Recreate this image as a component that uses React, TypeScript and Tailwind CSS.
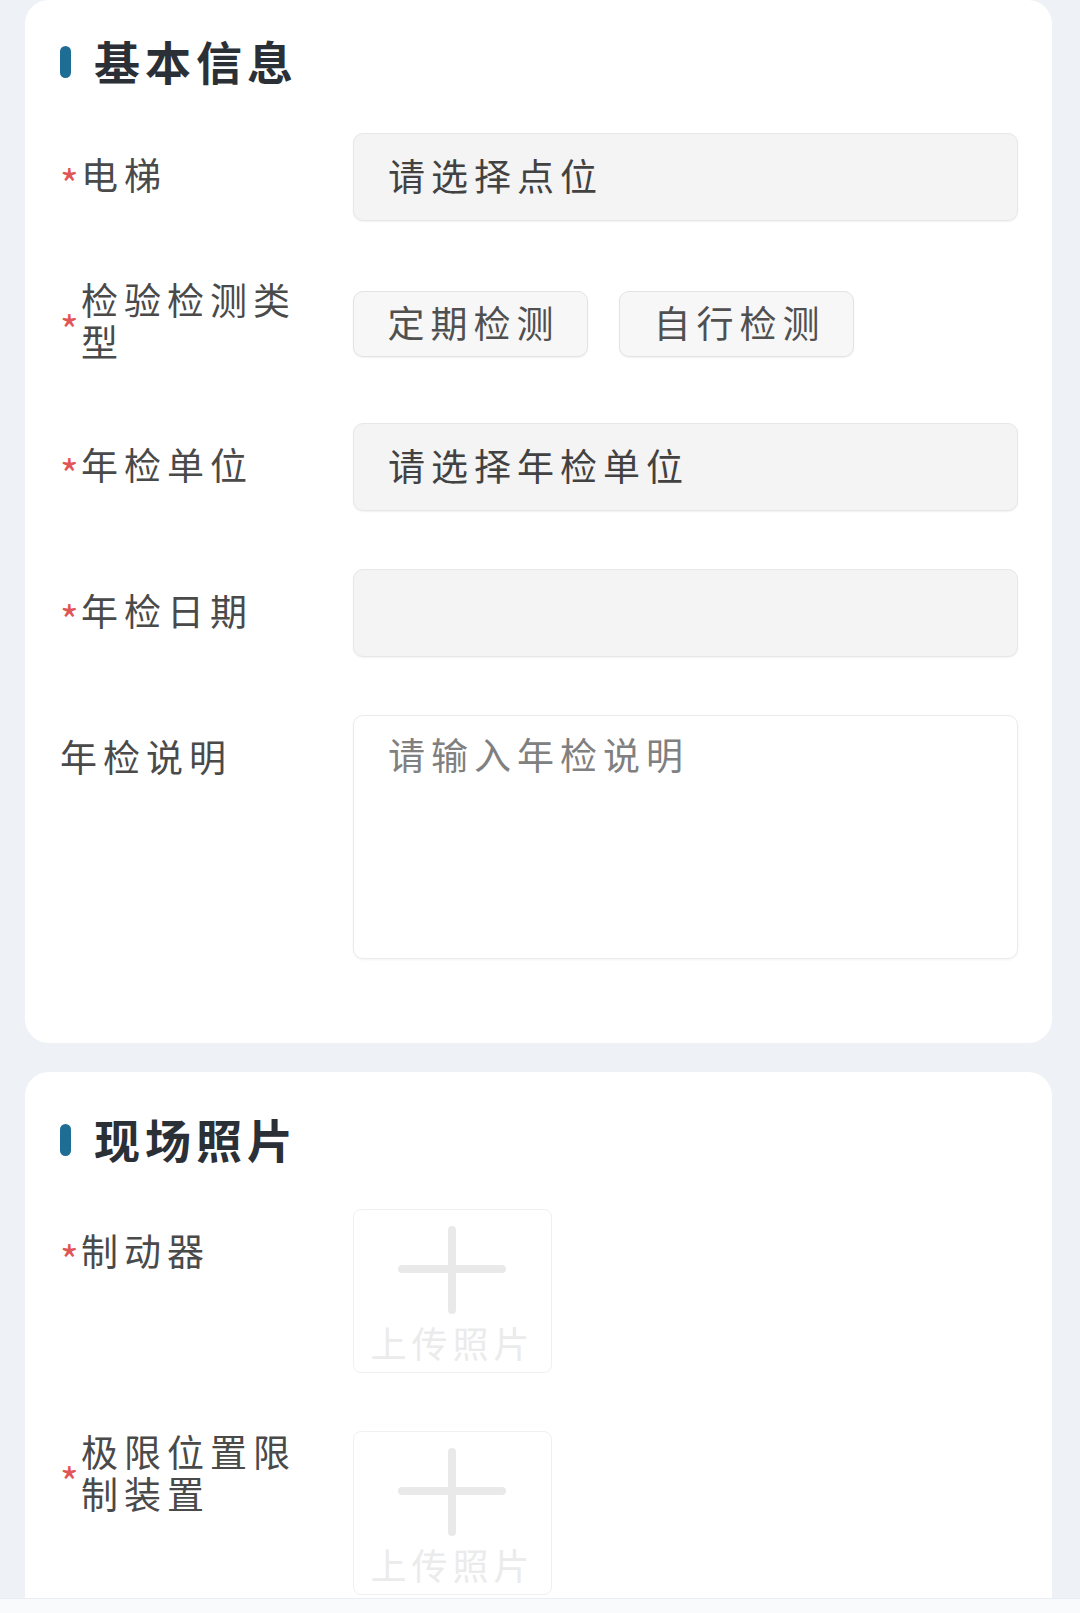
const font = "font-['Noto_Sans_CJK_SC','Noto_Sans',sans-serif]";

function SectionTitle({ children }: { children: string }) {
  return (
    <div className="flex h-[50px] items-center">
      <span className="h-[32px] w-[11px] rounded-full bg-[#1d6d94]" />
      <h2 className="ml-[23px] pb-[5px] text-[46px] leading-[50px] font-bold tracking-[5px] text-[#2b3037]">
        {children}
      </h2>
    </div>
  );
}

function Label({ text, required = false }: { text: string; required?: boolean }) {
  return (
    <div className="flex h-[86px] w-[293px] shrink-0 items-center pb-[4px]">
      {required && (
        <span className="w-[21px] shrink-0 text-[40px] leading-none text-[#de5656] translate-y-[9px]">
          *
        </span>
      )}
      <span className="max-w-[232px] text-[37px] leading-[42px] tracking-[6px] text-[#4a4a4a]">
        {text}
      </span>
    </div>
  );
}

function SelectBox({ placeholder }: { placeholder?: string }) {
  return (
    <div className="flex h-[88px] flex-1 items-center rounded-[10px] border border-[#e7e7e7] bg-[#f4f4f4] pb-[3px] pl-[34px] text-[37px] tracking-[6px] text-[#424242] shadow-[0_1px_2px_rgba(0,0,0,0.06)]">
      {placeholder}
    </div>
  );
}

function Upload() {
  return (
    <div className="flex h-[164px] w-[199px] flex-col items-center rounded-[8px] border border-[#f0f0f0] bg-white">
      <svg width="110" height="92" viewBox="0 0 110 92" className="mt-[16px]">
        <rect x="0" y="39" width="108" height="8" rx="4" fill="#e9e9e9" />
        <rect x="50" y="0" width="8" height="88" rx="4" fill="#e9e9e9" />
      </svg>
      <span className="mt-[4px] text-[36px] leading-[40px] tracking-[5px] text-[#ebebeb]">
        上传照片
      </span>
    </div>
  );
}

export default function App() {
  return (
    <div className={`${font} relative min-h-[1613px] w-full overflow-hidden bg-[#eef2f7]`}>
      {/* 基本信息 */}
      <section className="ml-[25px] mr-[28px] rounded-[24px] bg-white pt-[37px] pr-[34px] pb-[84px] pl-[35px]">
        <SectionTitle>基本信息</SectionTitle>

        <div className="mt-[46px] flex flex-col gap-[58px]">
          <div className="flex items-start">
            <Label text="电梯" required />
            <SelectBox placeholder="请选择点位" />
          </div>

          <div className="flex items-start">
            <Label text="检验检测类型" required />
            <div className="flex h-[86px] items-center gap-[31px] pt-[4px]">
              {["定期检测", "自行检测"].map((t) => (
                <button
                  key={t}
                  className="flex h-[66px] w-[235px] items-center justify-center rounded-[10px] border border-[#e3e3e3] bg-[#f7f7f7] pb-[3px] text-[37px] tracking-[6px] text-[#505050] shadow-[0_1px_2px_rgba(0,0,0,0.06)]"
                >
                  <span className="-mr-[6px]">{t}</span>
                </button>
              ))}
            </div>
          </div>

          <div className="flex items-start">
            <Label text="年检单位" required />
            <SelectBox placeholder="请选择年检单位" />
          </div>

          <div className="flex items-start">
            <Label text="年检日期" required />
            <SelectBox />
          </div>

          <div className="flex items-start">
            <Label text="年检说明" />
            <div className="h-[244px] flex-1 rounded-[10px] border border-[#ebebeb] bg-white pt-[17px] pl-[34px] text-[37px] leading-[43px] tracking-[6px] text-[#808080] shadow-[0_1px_3px_rgba(0,0,0,0.05)]">
              请输入年检说明
            </div>
          </div>
        </div>
      </section>

      {/* 现场照片 */}
      <section className="mt-[29px] ml-[25px] mr-[28px] rounded-t-[24px] bg-white pt-[43px] pr-[34px] pb-[3px] pl-[35px]">
        <SectionTitle>现场照片</SectionTitle>

        <div className="mt-[44px] flex flex-col gap-[58px]">
          <div className="flex items-start">
            <Label text="制动器" required />
            <Upload />
          </div>
          <div className="flex items-start">
            <Label text="极限位置限制装置" required />
            <Upload />
          </div>
        </div>
      </section>

      <div className="h-[16px] border-t border-[#e8edf3] bg-[#f8fafc]" />
    </div>
  );
}
